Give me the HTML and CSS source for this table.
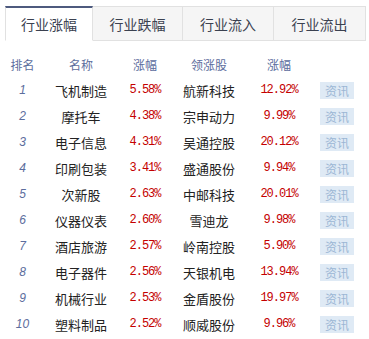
FILE: index.html
```html
<!DOCTYPE html>
<html lang="zh-CN">
<head>
<meta charset="utf-8">
<link rel="stylesheet" href="styles.css">
</head>
<body>
<div class="wrap">
  <div class="tabs">
    <div class="tab active">行业涨幅</div>
    <div class="tab">行业跌幅</div>
    <div class="tab">行业流入</div>
    <div class="tab">行业流出</div>
  </div>
  <div class="table">
    <div class="row head">
      <div class="c1">排名</div><div class="c2">名称</div><div class="c3">涨幅</div><div class="c4">领涨股</div><div class="c5">涨幅</div><div class="c6"></div>
    </div>
    <div class="row"><div class="c1 rank">1</div><div class="c2 name">飞机制造</div><div class="c3 pct">5.58%</div><div class="c4 name">航新科技</div><div class="c5 pct">12.92%</div><div class="c6"><span class="btn">资讯</span></div></div>
    <div class="row"><div class="c1 rank">2</div><div class="c2 name">摩托车</div><div class="c3 pct">4.38%</div><div class="c4 name">宗申动力</div><div class="c5 pct">9.99%</div><div class="c6"><span class="btn">资讯</span></div></div>
    <div class="row"><div class="c1 rank">3</div><div class="c2 name">电子信息</div><div class="c3 pct">4.31%</div><div class="c4 name">吴通控股</div><div class="c5 pct">20.12%</div><div class="c6"><span class="btn">资讯</span></div></div>
    <div class="row"><div class="c1 rank">4</div><div class="c2 name">印刷包装</div><div class="c3 pct">3.41%</div><div class="c4 name">盛通股份</div><div class="c5 pct">9.94%</div><div class="c6"><span class="btn">资讯</span></div></div>
    <div class="row"><div class="c1 rank">5</div><div class="c2 name">次新股</div><div class="c3 pct">2.63%</div><div class="c4 name">中邮科技</div><div class="c5 pct">20.01%</div><div class="c6"><span class="btn">资讯</span></div></div>
    <div class="row"><div class="c1 rank">6</div><div class="c2 name">仪器仪表</div><div class="c3 pct">2.60%</div><div class="c4 name">雪迪龙</div><div class="c5 pct">9.98%</div><div class="c6"><span class="btn">资讯</span></div></div>
    <div class="row"><div class="c1 rank">7</div><div class="c2 name">酒店旅游</div><div class="c3 pct">2.57%</div><div class="c4 name">岭南控股</div><div class="c5 pct">5.90%</div><div class="c6"><span class="btn">资讯</span></div></div>
    <div class="row"><div class="c1 rank">8</div><div class="c2 name">电子器件</div><div class="c3 pct">2.56%</div><div class="c4 name">天银机电</div><div class="c5 pct">13.94%</div><div class="c6"><span class="btn">资讯</span></div></div>
    <div class="row"><div class="c1 rank">9</div><div class="c2 name">机械行业</div><div class="c3 pct">2.53%</div><div class="c4 name">金盾股份</div><div class="c5 pct">19.97%</div><div class="c6"><span class="btn">资讯</span></div></div>
    <div class="row"><div class="c1 rank">10</div><div class="c2 name">塑料制品</div><div class="c3 pct">2.52%</div><div class="c4 name">顺威股份</div><div class="c5 pct">9.96%</div><div class="c6"><span class="btn">资讯</span></div></div>
  </div>
</div>
</body>
</html>
```

FILE: styles.css
```css
* { box-sizing: border-box; }
html, body { margin: 0; padding: 0; background: #fff; }
body {
  font-family: "Noto Sans CJK SC", "Liberation Sans", sans-serif;
  color: #222;
}
.wrap {
  width: 369px;
  padding: 6px 3px 0 5px;
}
.tabs {
  display: grid;
  grid-template-columns: 88px 90px 91px 92px;
  height: 35px;
}
.tab {
  background: #f5f5f5;
  border-top: 1px solid #e1e1e1;
  border-bottom: 1px solid #e1e1e1;
  border-right: 1px solid #e1e1e1;
  font-size: 14px;
  color: #3b4150;
  display: flex;
  align-items: center;
  justify-content: center;
  padding-top: 1px;
}
.tab.active {
  background: #fff;
  border-top: 2px solid #4d5a7e;
  border-left: 1px solid #e1e1e1;
  border-bottom: 1px solid #fff;
  padding-top: 0;
}
.table {
  margin-top: 10px;
}
.row {
  display: grid;
  grid-template-columns: 35px 82px 46px 82px 58px 58px;
  height: 26px;
  align-items: center;
  text-align: center;
}
.head {
  font-size: 12px;
  color: #5c6d9d;
}
.rank {
  font-family: "Liberation Sans", Arial, sans-serif;
  font-style: italic;
  font-size: 12px;
  color: #5c6d9d;
}
.name {
  font-size: 13px;
  color: #222;
}
.pct {
  font-family: "Liberation Mono", monospace;
  font-size: 12px;
  letter-spacing: -1px;
  color: #c40000;
}
.c6 { display: flex; justify-content: center; padding-left: 0; }
.btn {
  display: flex;
  align-items: center;
  justify-content: center;
  width: 34px;
  height: 17px;
  background: #dfeaf5;
  color: #9bb6d4;
  font-size: 12px;
  margin-left: 0;
}
```
